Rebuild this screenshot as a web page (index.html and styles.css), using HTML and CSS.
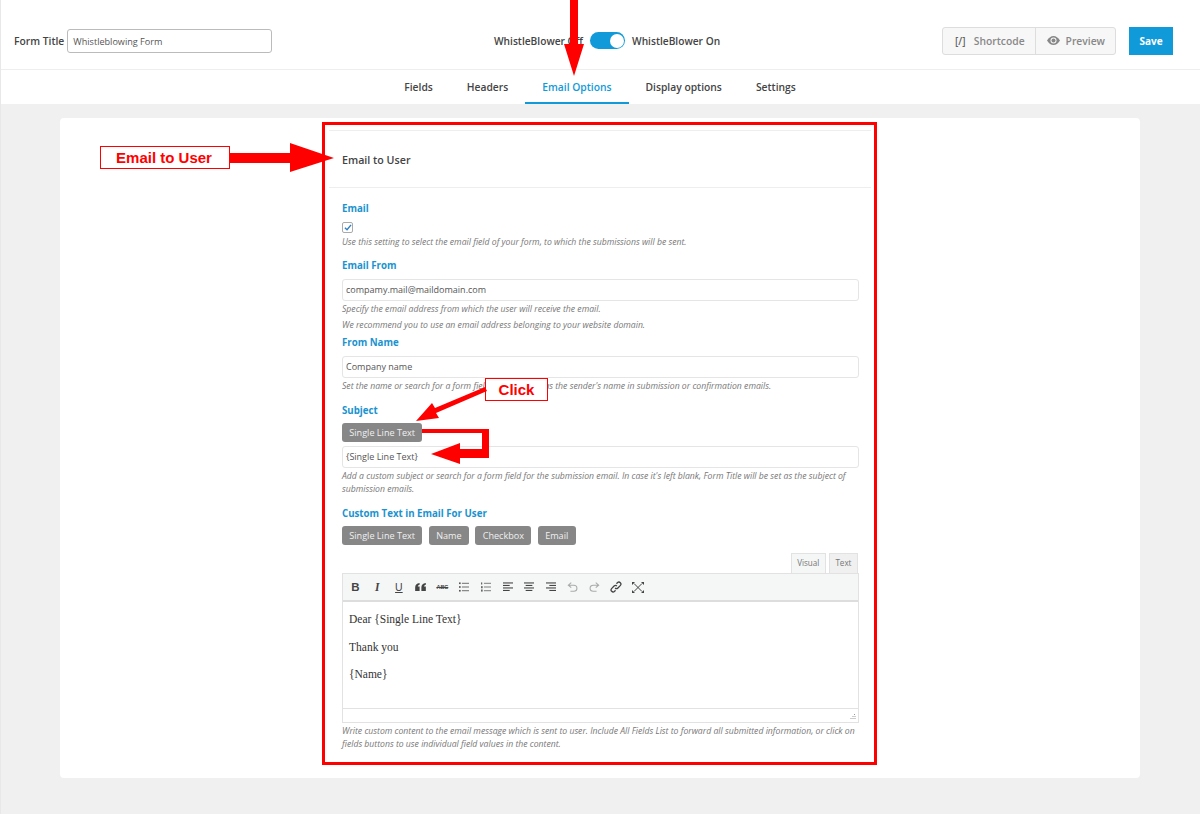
FILE: index.html
```html
<!DOCTYPE html>
<html lang="en">
<head>
  <meta charset="UTF-8" />
  <title>Whistleblowing Form</title>
  <link rel="stylesheet" href="styles.css">
</head>
<body>

<div class="page">
  <header class="topbar">
    <div class="form-title">
      <label>Form Title</label>
      <input type="text" value="Whistleblowing Form">
    </div>
    <div class="switcher">
      <span>WhistleBlower Off</span>
      <span class="toggle"><span class="knob"></span></span>
      <span>WhistleBlower On</span>
    </div>
    <div class="actions">
      <div class="btn-group">
        <button class="btn-light"><span class="code-ico">[/]</span>Shortcode</button>
        <button class="btn-light">
          <svg class="eye" width="13" height="9" viewBox="0 0 13 9"><path d="M0 4.500C2 1.500 4 0 6.500 0S11 1.500 13 4.500C11 7.500 9 9 6.500 9S2 7.500 0 4.500z" fill="#888"/><circle cx="6.500" cy="4.500" r="3" fill="#f7f7f7"/><circle cx="6.500" cy="4.500" r="2" fill="#888"/></svg>
          Preview
        </button>
      </div>
      <button class="btn-save">Save</button>
    </div>
  </header>

  <nav class="tabs">
    <a>Fields</a>
    <a>Headers</a>
    <a class="active">Email Options</a>
    <a>Display options</a>
    <a>Settings</a>
  </nav>

  <main class="content">
    <div class="card">
      <section class="panel">
        <h2 class="panel-title">Email to User</h2>
        <div class="panel-body">

          <div class="field field-email">
            <div class="field-label">Email</div>
            <span class="checkbox">
              <svg width="8" height="7" viewBox="0 0 9 8"><path d="M1 4.200L3.400 6.600 8 1" fill="none" stroke="#2f7fc4" stroke-width="1.600"/></svg>
            </span>
            <p class="help">Use this setting to select the email field of your form, to which the submissions will be sent.</p>
          </div>

          <div class="field field-from">
            <div class="field-label">Email From</div>
            <input class="text-input" type="text" value="compamy.mail@maildomain.com">
            <p class="help">Specify the email address from which the user will receive the email.</p>
            <p class="help help-second">We recommend you to use an email address belonging to your website domain.</p>
          </div>

          <div class="field field-name">
            <div class="field-label">From Name</div>
            <input class="text-input" type="text" value="Company name">
            <p class="help">Set the name or search for a form field to be applied as the sender's name in submission or confirmation emails.</p>
          </div>

          <div class="field field-subject">
            <div class="field-label">Subject</div>
            <div class="tags"><button class="tag">Single Line Text</button></div>
            <input class="text-input" type="text" value="{Single Line Text}">
            <p class="help">Add a custom subject or search for a form field for the submission email. In case it's left blank, Form Title will be set as the subject of submission emails.</p>
          </div>

          <div class="field field-custom">
            <div class="field-label">Custom Text in Email For User</div>
            <div class="tags">
              <button class="tag">Single Line Text</button>
              <button class="tag">Name</button>
              <button class="tag">Checkbox</button>
              <button class="tag">Email</button>
            </div>
          </div>

          <div class="editor-tabs">
            <span class="editor-tab on">Visual</span>
            <span class="editor-tab">Text</span>
          </div>
          <div class="editor">
            <div class="toolbar">
              <span class="tool tool-b">B</span>
              <span class="tool tool-i">I</span>
              <span class="tool tool-u">U</span>
              <span class="tool"><svg width="11" height="8" viewBox="0 0 12 9"><path d="M0 9V5C0 2 1.500.6 5 0v2C3.600 2.300 3 3 3 4h2v5zM7 9V5c0-3 1.500-4.400 5-5v2c-1.400.3-2 1-2 2h2v5z" fill="#444"/></svg></span>
              <span class="tool tool-abc">ABC</span>
              <span class="tool"><svg width="10" height="10" viewBox="0 0 12 11" fill="#555"><rect y="0" width="2" height="2"/><rect y="4.500" width="2" height="2"/><rect y="9" width="2" height="2"/><rect x="3.500" y=".5" width="8.500" height="1"/><rect x="3.500" y="5" width="8.500" height="1"/><rect x="3.500" y="9.500" width="8.500" height="1"/></svg></span>
              <span class="tool"><svg width="10" height="10" viewBox="0 0 12 11" fill="#666"><rect y="0" width="1.500" height="2.500"/><rect y="4.500" width="2" height="2.500"/><rect y="8.500" width="2" height="2.500"/><rect x="3.500" y=".5" width="8.500" height="1"/><rect x="3.500" y="5" width="8.500" height="1"/><rect x="3.500" y="9.500" width="8.500" height="1"/></svg></span>
              <span class="tool"><svg width="10" height="10" viewBox="0 0 12 11" fill="#444"><rect width="12" height="1.300"/><rect y="3" width="8" height="1.300"/><rect y="6" width="12" height="1.300"/><rect y="9" width="8" height="1.300"/></svg></span>
              <span class="tool"><svg width="10" height="10" viewBox="0 0 12 11" fill="#444"><rect width="12" height="1.300"/><rect x="2" y="3" width="8" height="1.300"/><rect y="6" width="12" height="1.300"/><rect x="2" y="9" width="8" height="1.300"/></svg></span>
              <span class="tool"><svg width="10" height="10" viewBox="0 0 12 11" fill="#444"><rect width="12" height="1.300"/><rect x="4" y="3" width="8" height="1.300"/><rect y="6" width="12" height="1.300"/><rect x="4" y="9" width="8" height="1.300"/></svg></span>
              <span class="tool"><svg width="11" height="10" viewBox="0 0 13 12" fill="none" stroke="#aaa" stroke-width="1.300"><path d="M5 .8L1.500 3.800 5 6.800M1.500 3.800H8c2.200 0 3.800 1.500 3.800 3.600S10.200 11 8 11H4"/></svg></span>
              <span class="tool"><svg width="11" height="10" viewBox="0 0 13 12" fill="none" stroke="#aaa" stroke-width="1.300"><path d="M8 .8l3.500 3L8 6.800M11.500 3.800H5C2.800 3.800 1.200 5.300 1.200 7.400S2.800 11 5 11h4"/></svg></span>
              <span class="tool"><svg width="12" height="12" viewBox="0 0 13 13" fill="none" stroke="#444" stroke-width="1.400"><path d="M5.500 7.500a2.200 2.200 0 0 0 3.100 0l2.700-2.700a2.200 2.200 0 0 0-3.100-3.100L7 2.900"/><path d="M7.500 5.500a2.200 2.200 0 0 0-3.100 0L1.700 8.200a2.200 2.200 0 0 0 3.100 3.100L6 10.100"/></svg></span>
              <span class="tool"><svg width="12" height="11" viewBox="0 0 12 11" fill="#444"><path d="M0 0h3L0 3zM12 0v3L9 0zM0 11V8l3 3zM12 11H9l3-3z"/><path d="M2 1.500l8 8M10 1.500l-8 8" stroke="#444" stroke-width="1"/></svg></span>
            </div>
            <div class="editor-area">
              <p>Dear {Single Line Text}</p>
              <p>Thank you</p>
              <p>{Name}</p>
            </div>
            <div class="statusbar">
              <svg width="6" height="6" viewBox="0 0 6 6" fill="#999"><rect x="4" y="0" width="1" height="1"/><rect x="2.500" y="2" width="1" height="1"/><rect x="4.500" y="2" width="1" height="1"/><rect x=".5" y="4" width="1" height="1"/><rect x="2.500" y="4" width="1" height="1"/><rect x="4.500" y="4" width="1" height="1"/></svg>
            </div>
          </div>
          <p class="help help-editor">Write custom content to the email message which is sent to user. Include All Fields List to forward all submitted information, or click on fields buttons to use individual field values in the content.</p>
        </div>
      </section>
    </div>
  </main>

  <!-- tutorial markup drawn over the screenshot -->
  <div class="mark-frame"></div>
  <div class="mark-note note-email">Email to User</div>
  <div class="mark-note note-click">Click</div>
  <svg class="mark-arrows" width="1200" height="814" viewBox="0 0 1200 814" fill="#f00">
    <path d="M570 0h8v44h6l-10 32-10-32h6z"/>
    <path d="M230 153h60v-10l44 15-44 14v-9h-60z"/>
    <path d="M485 387l2 4-51 22 3 5-23 3 16-18 3 5z"/>
    <path d="M422 429h67v29h-29v6l-29-10 29-11v6h22v-16h-60z"/>
  </svg>
</div>

</body>
</html>
```

FILE: styles.css
```css
* {
  box-sizing: border-box;
}
body {
  margin: 0;
  font-family: "Open Sans", Arial, sans-serif;
  color: #444;
  background-color: #fff;
}
.page {
  position: relative;
  width: 1200px;
  height: 814px;
  overflow: hidden;
  border-left: 1px solid #e8e8e8;
}

/* top bar */
.topbar {
  display: flex;
  align-items: center;
  justify-content: space-between;
  height: 70px;
  padding: 12px 27px 0 13px;
  border-bottom: 1px solid #eee;
}
.form-title {
  display: flex;
  align-items: center;
  gap: 3px;
}
.form-title label {
  font-size: 10.3px;
  font-weight: 600;
  color: #444;
}
.form-title input {
  width: 205px;
  height: 24px;
  padding: 1px 5px 0;
  border: 1px solid #bbb;
  border-radius: 3px;
  font-family: inherit;
  font-size: 9.1px;
  color: #555;
}
.switcher {
  display: flex;
  align-items: center;
  gap: 7px;
  font-size: 10.2px;
  font-weight: 600;
  color: #444;
}
.toggle {
  display: flex;
  justify-content: flex-end;
  width: 35px;
  height: 17px;
  padding: 1.5px;
  border-radius: 9px;
  background-color: #119ad9;
}
.knob {
  width: 14px;
  height: 14px;
  border-radius: 50%;
  background-color: #fff;
}
.actions {
  display: flex;
  align-items: center;
  gap: 13px;
}
.btn-group {
  display: flex;
  height: 28px;
  border: 1px solid #ddd;
  border-radius: 3px;
  background-color: #f7f7f7;
}
.btn-light {
  display: flex;
  align-items: center;
  gap: 6px;
  padding: 0 10px 0 11px;
  border: none;
  background: none;
  font-family: inherit;
  font-size: 10.3px;
  font-weight: 600;
  color: #888;
}
.btn-light + .btn-light {
  border-left: 1px solid #ddd;
}
.code-ico {
  width: 13px;
  margin-right: 1px;
  font-size: 10px;
  font-weight: 600;
  color: #666;
}
.btn-save {
  width: 44px;
  height: 28px;
  border: none;
  background-color: #119ad9;
  color: #fff;
  font-family: inherit;
  font-size: 10px;
  font-weight: 700;
}

/* tabs */
.tabs {
  display: flex;
  justify-content: center;
  height: 34px;
  margin-left: -1px;
}
.tabs a {
  padding: 0 17px;
  border-bottom: 2px solid transparent;
  font-size: 10.3px;
  font-weight: 600;
  line-height: 34px;
  color: #444;
}
.tabs a.active {
  border-bottom-color: #119ad9;
  color: #119ad9;
}

/* main */
.content {
  height: 710px;
  padding: 14px 60px 36px 59px;
  background-color: #f0f0f0;
}
.card {
  height: 660px;
  padding-top: 12px;
  border-radius: 4px;
  background-color: #fff;
}
.panel {
  width: 542px;
  height: 636px;
  margin-left: 269px;
  border-top: 1px solid #eee;
}
.panel-title {
  height: 57px;
  margin: 0;
  padding: 1px 13px 0;
  border-bottom: 1px solid #eee;
  font-size: 10.7px;
  font-weight: 600;
  line-height: 56px;
  color: #444;
}
.panel-body {
  padding: 13px 13px 0;
}
.field-label {
  margin-bottom: -2px;
  font-size: 9.7px;
  font-weight: 700;
  line-height: 16px;
  color: #1a93cf;
}
.checkbox {
  display: flex;
  align-items: center;
  justify-content: center;
  width: 11px;
  height: 11px;
  margin-top: 7px;
  border: 1px solid #aaa;
  border-radius: 2px;
}
.help {
  margin: 2.5px 0 0;
  font-size: 8.67px;
  font-style: italic;
  line-height: 13px;
  color: #777;
}
.text-input + .help {
  margin-top: 1.5px;
}
.help-second {
  margin-top: 3px;
}
.text-input {
  display: block;
  width: 517px;
  height: 22px;
  margin-top: 7px;
  padding: 0 3px 1px;
  border: 1px solid #e5e5e5;
  border-radius: 3px;
  font-family: inherit;
  font-size: 9px;
  color: #555;
}
.field-from {
  margin-top: 9.5px;
}
.field-name {
  margin-top: 3.5px;
}
.field-subject {
  margin-top: 10.5px;
}
.field-subject .text-input {
  margin-top: 4px;
}
.field-custom {
  margin-top: 10.5px;
}
.tags {
  display: flex;
  gap: 6.5px;
  margin-top: 6px;
}
.tag {
  height: 19px;
  padding: 0 7.3px;
  border: none;
  border-radius: 3px;
  background-color: #878787;
  color: #f0f0f0;
  font-family: inherit;
  font-size: 9.1px;
}

/* editor */
.editor-tabs {
  display: flex;
  justify-content: flex-end;
  gap: 3px;
  height: 20px;
  margin-top: 8px;
}
.editor-tab {
  height: 20px;
  padding: 0 5.5px;
  border: 1px solid #e2e2e2;
  border-bottom: none;
  background-color: #f0f0f0;
  font-size: 8.1px;
  line-height: 18px;
  color: #777;
}
.editor-tab.on {
  background-color: #f5f6f6;
}
.editor {
  width: 517px;
  border: 1px solid #e2e2e2;
}
.toolbar {
  display: flex;
  align-items: center;
  height: 28px;
  padding-left: 1.5px;
  border-bottom: 2px solid #ddd;
  background-color: #f5f6f6;
}
.tool {
  display: flex;
  align-items: center;
  justify-content: center;
  width: 21.75px;
  height: 24px;
  color: #444;
}
.tool-b,
.tool-i,
.tool-u {
  font-family: "Liberation Sans", Arial, sans-serif;
  font-size: 11.5px;
  font-weight: 700;
}
.tool-i {
  font-family: "Liberation Serif", serif;
  font-style: italic;
}
.tool-u {
  font-size: 10.5px;
  font-weight: 400;
  text-decoration: underline;
}
.tool-abc {
  font-family: "Liberation Sans", Arial, sans-serif;
  font-size: 5.5px;
  font-weight: 700;
  text-decoration: line-through;
}
.editor-area {
  height: 106px;
  padding: 10px 6px;
  background-color: #fff;
  font-family: "Liberation Serif", serif;
  font-size: 11.5px;
  line-height: 14px;
  color: #333;
}
.editor-area p {
  margin: 0 0 13.500px;
}
.statusbar {
  display: flex;
  align-items: flex-end;
  justify-content: flex-end;
  height: 14px;
  padding: 0 2px 2px 0;
  border-top: 1px solid #e2e2e2;
}
.help-editor {
  margin-top: 1.5px;
}

/* annotations */
.mark-frame {
  position: absolute;
  left: 321px;
  top: 122px;
  width: 555px;
  height: 643px;
  border: 3px solid #f00;
}
.mark-arrows {
  position: absolute;
  left: -1px;
  top: 0;
}
.mark-note {
  position: absolute;
  border: 1px solid #f00;
  background-color: #fff;
  color: #f00;
  font-family: "Liberation Sans", Arial, sans-serif;
  font-size: 15px;
  font-weight: 700;
  text-align: center;
}
.note-email {
  left: 99px;
  top: 146px;
  width: 130px;
  height: 23px;
  padding-right: 2px;
  line-height: 21px;
}
.note-click {
  left: 484px;
  top: 378px;
  width: 63px;
  height: 23px;
  line-height: 21px;
}
```
